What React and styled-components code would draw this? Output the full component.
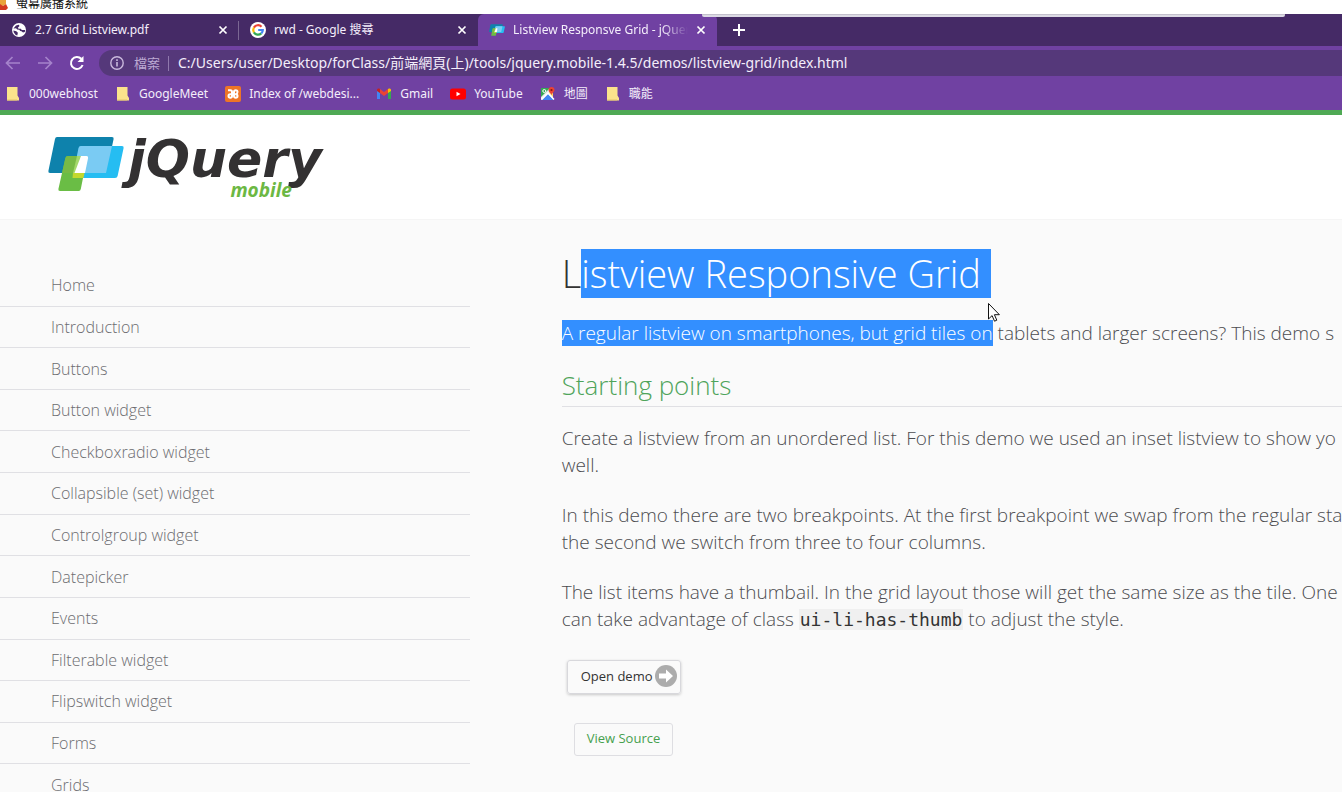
import React from "react";
import styled, { createGlobalStyle } from "styled-components";

const UI_FONT = '"Noto Sans", "Open Sans", "Noto Sans CJK TC", sans-serif';
const PAGE_FONT = '"Open Sans", "Noto Sans", sans-serif';

const GlobalStyle = createGlobalStyle`
  *, *::before, *::after { box-sizing: border-box; }
  body { margin: 0; overflow: hidden; background: #fafafa; font-family: ${PAGE_FONT}; }
  button, input { font: inherit; color: inherit; }
  a { color: inherit; text-decoration: none; }
  svg { display: block; flex: none; }
`;

const Screen = styled.div`
  height: 100vh;
  overflow: hidden;
  display: flex;
  flex-direction: column;
`;

/* ---------- browser window ---------- */

const CastBar = styled.div`
  flex: none;
  height: 14px;
  overflow: hidden;
  display: flex;
  align-items: flex-end;
  gap: 8px;
  padding-bottom: 4px;
  background: #fff;
  color: #111;
  font: 12px/14px "Noto Sans CJK TC", sans-serif;
`;

const Chrome = styled.div`
  flex: none;
  background: #7041a2;
  color: #f4eefb;
  font-family: ${UI_FONT};
`;

const TabStrip = styled.div`
  position: relative;
  display: flex;
  height: 32px;
  background: #452a66;
`;

const StripEdge = styled.div`
  position: absolute;
  top: 0;
  left: 702px;
  right: 57px;
  height: 3px;
  background: #dcdae4;
  border-top: 1px solid #c3c0cc;
  border-radius: 0 0 2px 2px;
`;

const Tab = styled.div`
  position: relative;
  flex: 0 0 239px;
  min-width: 0;
  display: flex;
  align-items: center;
  gap: 8px;
  padding: 0 11px;
  background: ${(p) => (p.$active ? "#7041a2" : "transparent")};
  border-radius: 6px 6px 0 0;

  &::after {
    content: "";
    position: absolute;
    right: 0;
    top: 7px;
    height: 19px;
    width: 1px;
    background: ${(p) => (p.$divider ? "#7b6793" : "transparent")};
  }
`;

const TabTitle = styled.button`
  flex: 1;
  min-width: 0;
  padding: 0;
  border: 0;
  background: none;
  text-align: left;
  font-size: 12px;
  line-height: 18px;
  white-space: nowrap;
  overflow: hidden;
  mask-image: ${(p) => (p.$fade ? "linear-gradient(90deg, #000 85%, transparent)" : "none")};
`;

const IconButton = styled.button`
  display: flex;
  flex: none;
  align-items: center;
  justify-content: center;
  width: ${(p) => p.$size || 16}px;
  height: ${(p) => p.$size || 16}px;
  padding: 0;
  border: 0;
  background: none;
  color: ${(p) => (p.$dim ? "#a583cb" : "#fff")};
`;

const CloseButton = styled(IconButton)`
  width: 10px;
`;

const NewTabButton = styled(IconButton)`
  margin-left: 6px;
`;

const Toolbar = styled.div`
  display: flex;
  align-items: center;
  height: 34px;
  gap: 16px;
  padding-left: 5px;
`;

const Omnibox = styled.label`
  flex: 1;
  display: flex;
  align-items: center;
  height: 26px;
  margin-left: -2px;
  padding-left: 11px;
  background: #55387a;
  border-radius: 13px 0 0 13px;
`;

const Scheme = styled.span`
  margin: 0 9px 0 10px;
  padding-right: 8px;
  border-right: 1px solid #8f78ad;
  color: #bca9d2;
  font-size: 13px;
  line-height: 15px;
`;

const Address = styled.input`
  flex: 1;
  min-width: 0;
  padding: 0;
  border: 0;
  outline: 0;
  background: none;
  font-size: 14px;
  line-height: 20px;
`;

const Bookmarks = styled.nav`
  display: flex;
  align-items: center;
  height: 30px;
  gap: 17px;
  padding: 0 5px 2px;
`;

const Bookmark = styled.a`
  display: flex;
  align-items: center;
  gap: 8px;
  font-size: 12px;
  line-height: 18px;
  white-space: nowrap;
`;

/* ---------- page ---------- */

const Header = styled.header`
  flex: none;
  height: 110px;
  padding: 22px 0 0 48px;
  display: flex;
  gap: 4px;
  background: #fff;
  border-top: 5px solid #4fa955;
  border-bottom: 1px solid #f5f5f5;
`;

const Wordmark = styled.div`
  display: flex;
  flex-direction: column;
  font-style: italic;
  font-weight: 700;
`;

const WordmarkName = styled.span`
  color: #333132;
  font-family: "DejaVu Sans", sans-serif;
  font-size: 52px;
  line-height: 44px;
`;

const WordmarkSub = styled.span`
  align-self: flex-end;
  margin-right: 30px;
  color: #6cb843;
  font-size: 19px;
  line-height: 19px;
`;

const Columns = styled.div`
  flex: 1;
  min-height: 0;
  display: flex;
  background: #fafafa;
`;

const Sidebar = styled.nav`
  flex: 0 0 35%;
  padding-top: 45px;
`;

const Menu = styled.ul`
  display: grid;
  grid-auto-rows: 1fr;
  min-height: 541px;
  margin: 0;
  padding: 0;
  list-style: none;
`;

const MenuItem = styled.li`
  display: flex;
  align-items: center;
  border-bottom: 1px solid #e0e0e4;
`;

const MenuLink = styled.a`
  flex: 1;
  padding-left: 51px;
  color: #6c6c70;
  font-size: 16px;
  font-weight: 300;
  line-height: 22px;
`;

const Content = styled.main`
  flex: 1;
  min-width: 0;
  overflow: hidden;
  padding: 29px 0 0 92px;
  color: #4c4c50;
  font-weight: 300;
`;

const Title = styled.h1`
  margin: 0 0 22px;
  color: #333;
  font-size: 38px;
  font-weight: 300;
  line-height: 49px;
  white-space: nowrap;
`;

const Selected = styled.mark`
  background: #338fff;
  color: #fff;
`;

const SelectedLine = styled(Selected)`
  position: relative;
  display: inline-block;
  padding-right: 10px;
`;

const Pointer = styled.svg`
  position: absolute;
  left: calc(100% - 3px);
  top: calc(100% + 5px);
`;

const Section = styled.h2`
  margin: 0 0 18px;
  padding-bottom: 3px;
  border-bottom: 1px solid #e0e0e4;
  color: #4fa45a;
  font-size: 26px;
  font-weight: 300;
  line-height: 35px;
`;

const Text = styled.p`
  margin: 0 0 ${(p) => (p.$lead ? 21 : 23)}px;
  font-size: 19px;
  line-height: 27px;
  white-space: nowrap;
`;

const Code = styled.code`
  padding: 0 1px;
  background: #f0f0f0;
  color: #333;
  font-family: "DejaVu Sans Mono", monospace;
  font-size: 18px;
  font-weight: 400;
  line-height: 21px;
`;

const Actions = styled.div`
  display: flex;
  flex-direction: column;
  align-items: flex-start;
  gap: 29px;
  padding-top: 4px;
`;

const DemoButton = styled.a`
  display: flex;
  align-items: center;
  gap: 2px;
  height: 34px;
  margin-left: 5px;
  padding: 0 3px 2px 13px;
  border: 1px solid #d8d8dc;
  border-radius: 3px;
  box-shadow: 0 1px 3px rgba(0, 0, 0, 0.2);
  color: #333;
  font-size: 13px;
  font-weight: 400;
  line-height: 18px;
`;

const SourceButton = styled.button`
  height: 33px;
  margin-left: 12px;
  padding: 0 12px 3px;
  border: 1px solid #dedee2;
  border-radius: 3px;
  background: #fafafa;
  color: #46a04e;
  font-size: 13px;
  font-weight: 400;
  line-height: 18px;
`;

/* ---------- icons ---------- */

const CastIcon = () => (
  <svg width="8" height="10" viewBox="0 0 8 10">
    <path d="M0 0h6v4L3 6 0 5z" fill="#e9a33a" />
    <path d="M0 4l3 2 3-2 2 4-2 2H0z" fill="#d3391f" />
  </svg>
);

const GlobeIcon = () => (
  <svg width="16" height="16" viewBox="0 0 16 16">
    <circle cx="8" cy="8" r="7" fill="#fff" />
    <path d="M2.500 6.500L5 3.500l2.800-.7L8.500 4 7 5.500l.5 1.200h2.300l1 1.300h3.400l-.4 2-1.800.5-1.500-1.300-1.300-.2-.9-1.300-2-.2L5 6.200z" fill="#452a66" />
    <path d="M2.300 8.500l3 .7 1.600 1.500-.6 2.800-1.600-.6-1.900-2.300z" fill="#452a66" />
  </svg>
);

const GoogleIcon = () => (
  <svg width="16" height="16" viewBox="0 0 16 16">
    <circle cx="8" cy="8" r="8" fill="#fff" />
    <g fill="none" strokeWidth="2.200">
      <path d="M11.500 4.700A4.800 4.800 0 0 0 3.900 5.600" stroke="#ea4335" />
      <path d="M3.900 5.600a4.800 4.800 0 0 0 0 4.800" stroke="#fbbc05" />
      <path d="M3.900 10.400a4.800 4.800 0 0 0 7.400 1" stroke="#34a853" />
      <path d="M11.300 11.400A4.800 4.800 0 0 0 12.800 8H8.200" stroke="#4285f4" />
    </g>
  </svg>
);

const JqmMark = ({ width, height }) => (
  <svg width={width} height={height} viewBox="0 0 76 54" aria-hidden="true">
    <path d="M9 0h55q2 0 1.600 2l-7 33q-.4 1-2 1H2q-2 0-1.600-2L7 2q.4-2 2-2z" fill="#0e82ac" />
    <path d="M33 9h41q2 0 1.600 2l-6 28q-.4 2-2.600 2H25l6-30q.4-2 2-2z" fill="#25bdf2" />
    <path d="M33 9h31l-6 27H25.500l5-25q.4-2 2.500-2z" fill="#7acbf3" />
    <path d="M20 19h11l-5.500 22H35l-2.200 11q-.4 2-2 2H12q-2 0-1.600-2l7-31q.4-2 2.600-2z" fill="#6abd45" />
    <path d="M20 19h10l-4 17H14l3.400-15q.4-2 2.600-2z" fill="#78ba45" />
    <path d="M29 19h4l-4 17h-4z" fill="#a5d86b" />
    <path d="M33 19h5.500q2 0 1.600 2L37 36H26.500z" fill="#fff" />
    <path d="M25 36h11.500l-1 5H24.500z" fill="#c3d82e" />
  </svg>
);

const CloseIcon = () => (
  <svg width="10" height="10" viewBox="0 0 10 10">
    <path d="M1.500 1.500l7 7m0-7l-7 7" stroke="currentColor" strokeWidth="1.700" />
  </svg>
);

const PlusIcon = () => (
  <svg width="12" height="12" viewBox="0 0 12 12">
    <path d="M6 0v12M0 6h12" stroke="currentColor" strokeWidth="2" />
  </svg>
);

const ArrowIcon = ({ flip }) => (
  <svg width="16" height="16" viewBox="0 0 16 16">
    <path
      d={flip ? "M1 8h13M8.500 2l6 6-6 6" : "M15 8H2M7.500 2l-6 6 6 6"}
      fill="none"
      stroke="currentColor"
      strokeWidth="1.700"
    />
  </svg>
);

const ReloadIcon = () => (
  <svg width="16" height="16" viewBox="0 0 16 16">
    <path d="M13.600 10A6 6 0 1 1 12.300 3.800" fill="none" stroke="currentColor" strokeWidth="2" />
    <path d="M14.500 1v6h-6z" fill="currentColor" />
  </svg>
);

const InfoIcon = () => (
  <svg width="14" height="14" viewBox="0 0 14 14">
    <circle cx="7" cy="7" r="6.200" fill="none" stroke="#c9b9dc" strokeWidth="1.400" />
    <path d="M7 6v4.500M7 3.300v1.600" stroke="#c9b9dc" strokeWidth="1.600" />
  </svg>
);

const FolderIcon = () => (
  <svg width="16" height="16" viewBox="0 0 16 16">
    <path d="M2 1h10.500v8.500L14 12v2.500H2z" fill="#fbe38c" />
    <path d="M2 13.500h10v1H2z" fill="#e2c56c" />
  </svg>
);

const XamppIcon = () => (
  <svg width="16" height="16" viewBox="0 0 16 16">
    <rect width="16" height="16" rx="2" fill="#ee7526" />
    <path
      d="M3 4.300h2.500q1.500 0 1.500 1.700v4q0 1.700-1.700 1.700T3.500 10q0-1.700 1.700-1.700h5.600q1.700 0 1.700 1.700t-1.700 1.700T9 10V6q0-1.700 1.800-1.700T12.500 6q0 1.500-1.300 2"
      fill="none"
      stroke="#fff"
      strokeWidth="2"
    />
  </svg>
);

const GmailIcon = () => (
  <svg width="16" height="16" viewBox="0 0 16 16">
    <path d="M1 4v9h3V6.500z" fill="#4285f4" />
    <path d="M15 4v9h-3V6.500z" fill="#34a853" />
    <path d="M4 3l4 3 4-3v4l-4 3-4-3z" fill="#ea4335" />
    <path d="M1 4q0-2 2-1.500L4 3v4L1 5z" fill="#c5221f" />
    <path d="M15 4q0-2-2-1.500L12 3v4l3-2z" fill="#fbbc04" />
  </svg>
);

const YouTubeIcon = () => (
  <svg width="16" height="16" viewBox="0 0 16 16">
    <rect y="2.500" width="16" height="11" rx="2.500" fill="#f00" />
    <path d="M6.500 5.700v4.600l4-2.300z" fill="#fff" />
  </svg>
);

const MapsIcon = () => (
  <svg width="16" height="16" viewBox="0 0 16 16">
    <rect x="1" y="2" width="12" height="12" rx="1" fill="#e8eaed" />
    <path d="M1 2h9l-9 9z" fill="#34a853" />
    <path d="M2 14l6-6 6 6z" fill="#4285f4" />
    <path d="M9 3l4 4v4L9 7z" fill="#fdd663" />
    <path d="M1.500 13.500L8 7l6 6.500" fill="none" stroke="#fff" strokeWidth="1.500" />
    <path d="M11.500 1A3 3 0 0 1 14.500 4c0 2-2.200 2.600-3 5-.8-2.400-3-3-3-5a3 3 0 0 1 3-3z" fill="#ea4335" />
    <circle cx="11.500" cy="4" r="1.100" fill="#8c1a11" />
    <circle cx="4.300" cy="5" r="1.500" fill="none" stroke="#fff" />
  </svg>
);

const DemoArrow = () => (
  <svg width="22" height="22" viewBox="0 0 22 22">
    <circle cx="11" cy="11" r="11" fill="#acacac" />
    <path d="M4 8.500h7V4.500l7 6.500-7 6.500v-4H4z" fill="#fff" />
  </svg>
);

/* ---------- data ---------- */

const bookmarks = [
  ["000webhost", FolderIcon],
  ["GoogleMeet", FolderIcon],
  ["Index of /webdesi...", XamppIcon],
  ["Gmail", GmailIcon],
  ["YouTube", YouTubeIcon],
  ["地圖", MapsIcon],
  ["職能", FolderIcon],
];

const menu = [
  "Home",
  "Introduction",
  "Buttons",
  "Button widget",
  "Checkboxradio widget",
  "Collapsible (set) widget",
  "Controlgroup widget",
  "Datepicker",
  "Events",
  "Filterable widget",
  "Flipswitch widget",
  "Forms",
  "Grids",
];

function BrowserTab({ icon, title, active, divider }) {
  return (
    <Tab $active={active} $divider={divider}>
      {icon}
      <TabTitle $fade={active}>{title}</TabTitle>
      <CloseButton aria-label="Close tab">
        <CloseIcon />
      </CloseButton>
    </Tab>
  );
}

export default function App() {
  return (
    <Screen>
      <GlobalStyle />
      <CastBar>
        <CastIcon />
        <span>螢幕廣播系統</span>
      </CastBar>

      <Chrome>
        <TabStrip>
          <BrowserTab icon={<GlobeIcon />} title="2.7 Grid Listview.pdf" divider />
          <BrowserTab icon={<GoogleIcon />} title="rwd - Google 搜尋" />
          <BrowserTab icon={<JqmMark width={16} height={12} />} title="Listview Responsve Grid - jQuery" active />
          <NewTabButton $size={32} aria-label="New tab">
            <PlusIcon />
          </NewTabButton>
          <StripEdge />
        </TabStrip>
        <Toolbar>
          <IconButton $dim aria-label="Back">
            <ArrowIcon />
          </IconButton>
          <IconButton $dim aria-label="Forward">
            <ArrowIcon flip />
          </IconButton>
          <IconButton aria-label="Reload">
            <ReloadIcon />
          </IconButton>
          <Omnibox>
            <InfoIcon />
            <Scheme>檔案</Scheme>
            <Address
              aria-label="Address"
              defaultValue="C:/Users/user/Desktop/forClass/前端網頁(上)/tools/jquery.mobile-1.4.5/demos/listview-grid/index.html"
            />
          </Omnibox>
        </Toolbar>
        <Bookmarks>
          {bookmarks.map(([name, Icon]) => (
            <Bookmark href="#" key={name}>
              <Icon />
              {name}
            </Bookmark>
          ))}
        </Bookmarks>
      </Chrome>

      <Header>
        <JqmMark width={76} height={54} />
        <Wordmark>
          <WordmarkName>jQuery</WordmarkName>
          <WordmarkSub>mobile</WordmarkSub>
        </Wordmark>
      </Header>

      <Columns>
        <Sidebar>
          <Menu>
            {menu.map((name) => (
              <MenuItem key={name}>
                <MenuLink href="#">{name}</MenuLink>
              </MenuItem>
            ))}
          </Menu>
        </Sidebar>

        <Content>
          <Title>
            L
            <SelectedLine>
              istview Responsive Grid
              <Pointer width="12" height="19" viewBox="0 0 12 19">
                <path
                  d="M.5.500v15.500l3.600-3.400 2.400 5.600 2.300-1-2.400-5.500h5z"
                  fill="#fff"
                  stroke="#111"
                />
              </Pointer>
            </SelectedLine>
          </Title>
          <Text $lead>
            <Selected>A regular listview on smartphones, but grid tiles on</Selected> tablets and larger screens? This
            demo s
          </Text>

          <Section>Starting points</Section>
          <Text>
            Create a listview from an unordered list. For this demo we used an inset listview to show yo
            <br />
            well.
          </Text>
          <Text>
            In this demo there are two breakpoints. At the first breakpoint we swap from the regular sta
            <br />
            the second we switch from three to four columns.
          </Text>
          <Text>
            The list items have a thumbail. In the grid layout those will get the same size as the tile. One
            <br />
            can take advantage of class <Code>ui-li-has-thumb</Code> to adjust the style.
          </Text>

          <Actions>
            <DemoButton href="#">
              Open demo
              <DemoArrow />
            </DemoButton>
            <SourceButton>View Source</SourceButton>
          </Actions>
        </Content>
      </Columns>
    </Screen>
  );
}
